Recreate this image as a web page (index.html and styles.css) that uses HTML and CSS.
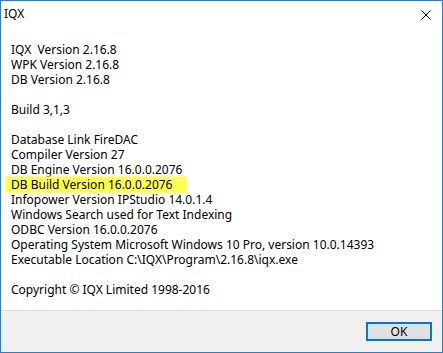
FILE: index.html
```
<!DOCTYPE html>
<html>
<head>
<meta charset="utf-8">
<link rel="stylesheet" href="styles.css">
</head>
<body>
<div class="window">
  <div class="titlebar">
    <span class="title">IQX</span>
    <svg class="close" width="10" height="10" viewBox="0 0 10 10"><path d="M0.5 0.5 L9.5 9.5 M9.5 0.5 L0.5 9.5" stroke="#000" stroke-width="1"/></svg>
  </div>
  <div class="content">
    <div class="line">IQX&nbsp; Version 2.16.8</div>
    <div class="line">WPK Version 2.16.8</div>
    <div class="line">DB Version 2.16.8</div>
    <div class="line">&nbsp;</div>
    <div class="line">Build 3,1,3</div>
    <div class="line">&nbsp;</div>
    <div class="line">Database Link FireDAC</div>
    <div class="line">Compiler Version 27</div>
    <div class="line">DB Engine Version 16.0.0.2076</div>
    <div class="line"><span class="hl">DB Build Version 16.0.0.2076</span></div>
    <div class="line">Infopower Version IPStudio 14.0.1.4</div>
    <div class="line">Windows Search used for Text Indexing</div>
    <div class="line">ODBC Version 16.0.0.2076</div>
    <div class="line">Operating System Microsoft Windows 10 Pro, version 10.0.14393</div>
    <div class="line">Executable Location C:\IQX\Program\2.16.8\iqx.exe</div>
    <div class="line">&nbsp;</div>
    <div class="line">Copyright © IQX Limited 1998-2016</div>
  </div>
  <div class="footer">
    <button class="ok">OK</button>
  </div>
</div>
</body>
</html>
```
FILE: styles.css
```
* { box-sizing: border-box; }
html, body { margin: 0; padding: 0; background: #fff; }
body { font-family: "Noto Sans", "Open Sans", sans-serif; font-size: 12px; color: #000; }
.window {
  width: 443px; height: 353px;
  border: 1px solid #1883d7;
  display: flex; flex-direction: column;
  background: #fff;
}
.titlebar {
  height: 30px; flex: none;
  display: flex; align-items: center; justify-content: space-between;
  padding: 0 11px 5px 3px;
}
.title { font-size: 12px; line-height: 15px; }
.close { display: block; margin-top: 2px; }
.content {
  flex: 1;
  padding: 11px 10px 0 10px;
}
.line { line-height: 15px; height: 15px; white-space: nowrap; }
.hl {
  background: #ffff4f;
  display: inline-block;
  margin-left: -5px;
  padding: 0 14px 0 5px;
  box-shadow: 0 0 2px 1px #ffff80;
}
.footer {
  height: 42px; flex: none;
  background: #f0f0f0;
  border-top: 1px solid #dfdfdf;
  display: flex; justify-content: flex-end; align-items: flex-start;
  padding: 11px 10px 0 0;
}
.ok {
  width: 66px; height: 19px;
  border: 2px solid #0078d7;
  background: #e1e1e1;
  font-family: inherit; font-size: 12px;
  padding: 0; margin: 0;
  line-height: 14px;
  color: #000;
}
```
